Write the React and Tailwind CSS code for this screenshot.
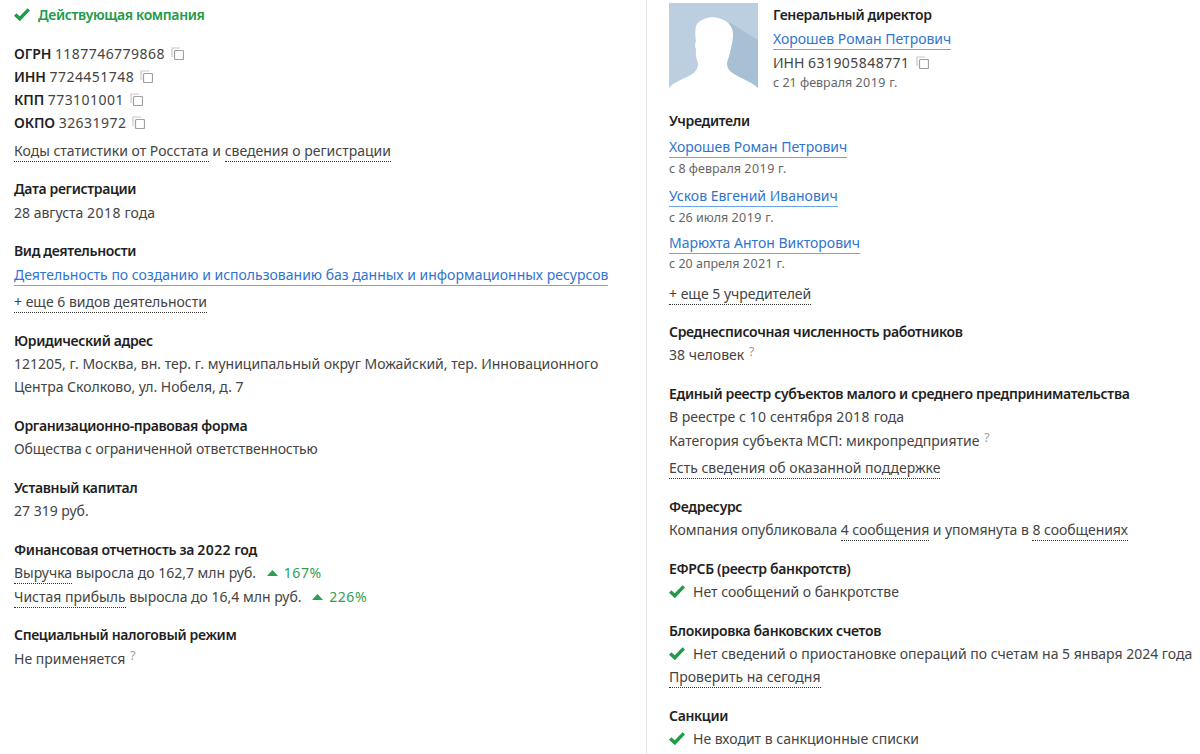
const F = { fontFamily: '"Noto Sans", sans-serif' };

function Check({ className = "" }) {
  return (
    <svg width="16" height="13" viewBox="0 0 16 13" className={`shrink-0 ${className}`}>
      <path d="M1.2 6.4 L5.8 10.8 L14.8 1.4" fill="none" stroke="#219a49" strokeWidth="3.4" />
    </svg>
  );
}

function Copy() {
  return (
    <svg width="13" height="13" viewBox="0 0 13 13" className="inline-block ml-[6px] align-[-1px]">
      <path d="M1 10V1H9" fill="none" stroke="#c8c8c8" strokeWidth="1.2" />
      <rect x="3.5" y="3.5" width="9" height="9" rx="1" fill="#fff" stroke="#a0a0a0" strokeWidth="1.2" />
    </svg>
  );
}

const Dot = ({ children }) => (
  <span className="border-b border-dotted border-[#333] pb-[1px]">{children}</span>
);
const Lnk = ({ children }) => (
  <span className="text-[#2f74d0] border-b border-[#6aa5ef] pb-[1px]">{children}</span>
);
const N = ({ children, c = "tracking-[0.45px]" }) => <span className={c}>{children}</span>;
const Q = () => <sup className="text-[#a0a0a0] text-[13px] ml-[1px] top-[-4px]">?</sup>;

const T = ({ children }) => <div className="font-semibold tracking-[-0.35px] text-[#1f1f1f] leading-[23.4px]">{children}</div>;
const L = ({ children, c = "" }) => <div className={`leading-[23.4px] ${c}`}>{children}</div>;
const Small = ({ children, c = "" }) => <div className={`text-[12.5px] text-[#666] leading-[20px] ${c}`}>{children}</div>;
const Sec = ({ children, c = "mb-[15.2px]" }) => <section className={c}>{children}</section>;

const Key = ({ k, v }) => (
  <div className="leading-[23px]">
    <b className="font-semibold tracking-[-0.1px] text-[#1f1f1f]">{k}</b> <N>{v}</N>
    <Copy />
  </div>
);

const Up = ({ v }) => (
  <span className="text-[#2f9e55] ml-[7px]">
    <svg width="11" height="6" viewBox="0 0 11 6" className="inline-block mr-[6px] align-[2px]">
      <path d="M5.5 0 L11 6 H0 Z" fill="#2f9e55" />
    </svg>
    <N c="tracking-[0.6px]">{v}</N>
  </span>
);

function Photo() {
  return (
    <svg width="89" height="89" viewBox="0 0 89 89" className="shrink-0">
      <rect width="89" height="89" fill="#bccfe0" />
      <path d="M60 19 L89 37 V89 H55 Z" fill="#a8c0d4" />
      <path
        d="M0 89 V85 C4 80 12 77 20 73 C26 70 29 66 29 60 C27 55 26.5 50 27 46 C25.500 44 26 40 27 38 C26 32 26 24 28 21 C33 15 42 13 49 15 C58 17 64 23 64 31 C64 36 63 41 62 45 C61 51 59 56 58 60 C58 65 60 68 65 71 C73 76 83 79 89 85 V89 Z"
        fill="#fff"
      />
    </svg>
  );
}

export default function App() {
  return (
    <div style={F} className="flex w-[1200px] h-[754px] overflow-hidden bg-white text-[14px] text-[#444]">
      <div className="w-[646px] pl-[14px] pt-[3px] shrink-0">
        <div className="flex items-center gap-[8px] font-semibold tracking-[-0.35px] text-[#219a49] leading-[23px] mb-[16px]">
          <Check />
          <span>Действующая компания</span>
        </div>
        <Sec c="mb-[15px]">
          <Key k="ОГРН" v="1187746779868" />
          <Key k="ИНН" v="7724451748" />
          <Key k="КПП" v="773101001" />
          <Key k="ОКПО" v="32631972" />
          <L c="mt-[5px]"><Dot>Коды статистики от Росстата</Dot> и <Dot>сведения о регистрации</Dot></L>
        </Sec>
        <Sec><T>Дата регистрации</T><L>28 августа <N>2018</N> года</L></Sec>
        <Sec c="mb-[15px]">
          <T>Вид деятельности</T>
          <L><Lnk>Деятельность по созданию и использованию баз данных и информационных ресурсов</Lnk></L>
          <L c="mt-[4px]"><Dot>+ еще 6 видов деятельности</Dot></L>
        </Sec>
        <Sec>
          <T>Юридический адрес</T>
          <L>121205, г. Москва, вн. тер. г. муниципальный округ Можайский, тер. Инновационного</L>
          <L>Центра Сколково, ул. Нобеля, д. 7</L>
        </Sec>
        <Sec><T>Организационно-правовая форма</T><L c="tracking-[-0.1px]">Общества с ограниченной ответственностью</L></Sec>
        <Sec><T>Уставный капитал</T><L>27 319 руб.</L></Sec>
        <Sec>
          <T>Финансовая отчетность за <N>2022</N> год</T>
          <L><Dot>Выручка</Dot> выросла до 162,7 млн руб. <Up v="167%" /></L>
          <L><Dot>Чистая прибыль</Dot> выросла до 16,4 млн руб. <Up v="226%" /></L>
        </Sec>
        <Sec><T>Специальный налоговый режим</T><L>Не применяется <Q /></L></Sec>
      </div>
      <div className="flex-1 border-l border-[#e4e4e4] pl-[22px] pt-[3px] min-w-0 whitespace-nowrap">
        <div className="flex gap-[15px] mb-[16px]">
          <Photo />
          <div>
            <T>Генеральный директор</T>
            <L c="mt-[1px]"><Lnk>Хорошев Роман Петрович</Lnk></L>
            <L>ИНН <N>631905848771</N><Copy /></L>
            <Small c="-mt-[1px]">с 21 февраля <N>2019</N> г.</Small>
          </div>
        </div>
        <Sec c="mb-[14px]">
          <T>Учредители</T>
          <L c="mt-[2.6px]"><Lnk>Хорошев Роман Петрович</Lnk></L>
          <Small c="mb-[5.5px]">с 8 февраля <N>2019</N> г.</Small>
          <L><Lnk>Усков Евгений Иванович</Lnk></L>
          <Small c="mb-[3.5px]">с 26 июля <N>2019</N> г.</Small>
          <L><Lnk>Марюхта Антон Викторович</Lnk></L>
          <Small c="mb-[8px]">с 20 апреля <N>2021</N> г.</Small>
          <L><Dot>+ еще 5 учредителей</Dot></L>
        </Sec>
        <Sec><T>Среднесписочная численность работников</T><L>38 человек <Q /></L></Sec>
        <Sec c="mb-[15.5px]">
          <T>Единый реестр субъектов малого и среднего предпринимательства</T>
          <L>В реестре с <N>10</N> сентября <N>2018</N> года</L>
          <L>Категория субъекта МСП: микропредприятие <Q /></L>
          <L c="mt-[4px]"><Dot>Есть сведения об оказанной поддержке</Dot></L>
        </Sec>
        <Sec c="mb-[15px]"><T>Федресурс</T><L c="tracking-[-0.05px]">Компания опубликовала <Dot>4 сообщения</Dot> и упомянута в <Dot>8 сообщениях</Dot></L></Sec>
        <Sec c="mb-[15px]">
          <T>ЕФРСБ (реестр банкротств)</T>
          <div className="flex items-center gap-[8px] leading-[23.4px]"><Check /><span>Нет сообщений о банкротстве</span></div>
        </Sec>
        <Sec c="mb-[15px]">
          <T>Блокировка банковских счетов</T>
          <div className="flex items-center gap-[8px] leading-[23.4px]"><Check /><span>Нет сведений о приостановке операций по счетам на 5 января 2024 года</span></div>
          <L><Dot>Проверить на сегодня</Dot></L>
        </Sec>
        <Sec>
          <T>Санкции</T>
          <div className="flex items-center gap-[8px] leading-[23.4px]"><Check /><span>Не входит в санкционные списки</span></div>
        </Sec>
      </div>
    </div>
  );
}
